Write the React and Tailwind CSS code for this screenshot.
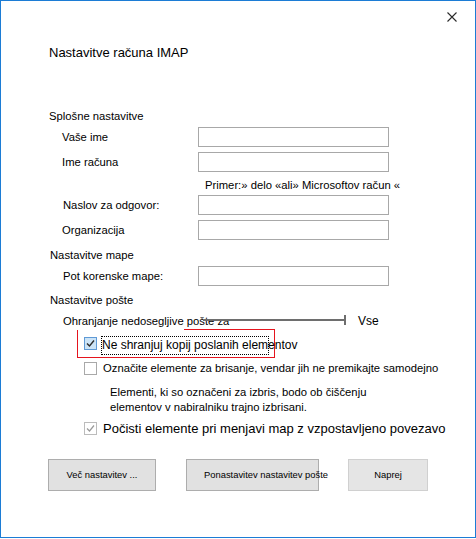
import React from "react";

function Check({ color = "#333", w = 1.4 }) {
  return (
    <svg width="11" height="11" viewBox="0 0 11 11" className="block">
      <polyline points="2,5.5 4.5,8 9,2.5" fill="none" stroke={color} strokeWidth={w} />
    </svg>
  );
}

function Box({ variant }) {
  if (variant === "focus") {
    return (
      <div className="w-[13px] h-[13px] border border-[#5f9ad6] bg-[#cce4f7] flex items-center justify-center shrink-0">
        <Check color="#2b2b2b" />
      </div>
    );
  }
  if (variant === "disabled") {
    return (
      <div className="w-[13px] h-[13px] border border-[#bcbcbc] bg-white flex items-center justify-center shrink-0">
        <Check color="#9a9a9a" w={1.2} />
      </div>
    );
  }
  return <div className="w-[13px] h-[13px] border border-[#a9a9a9] bg-white shrink-0" />;
}

function Field({ label, pl, mt }) {
  return (
    <div className={`flex items-center h-[20px] ${mt}`}>
      <div className={`w-[149px] ${pl} text-[11.25px] leading-[16px] whitespace-nowrap`}>{label}</div>
      <div className="w-[191px] h-[20px] border border-[#a8a8a8] bg-white" />
    </div>
  );
}

export default function App() {
  return (
    <div
      className="w-[476px] h-[538px] border border-[#1c7cd5] bg-white flex flex-col text-black"
      style={{ fontFamily: '"Liberation Sans", Arial, sans-serif' }}
    >
      <div className="h-[42px] flex justify-end items-start pt-[11px] pr-[18px]">
        <svg width="10" height="10" viewBox="0 0 10 10" className="block">
          <path d="M0.5 0.5 L9.5 9.5 M9.5 0.5 L0.5 9.5" stroke="#2a2a2a" strokeWidth="1.1" fill="none" />
        </svg>
      </div>

      <div className="pl-[48px] flex flex-col">
        <div className="h-[20px] leading-[20px] text-[13px] whitespace-nowrap">Nastavitve računa IMAP</div>

        <div className="mt-[45px] h-[17px] leading-[17px] text-[11.25px]">Splošne nastavitve</div>

        <Field label="Vaše ime" pl="pl-[13px]" mt="mt-[2px]" />
        <Field label="Ime računa" pl="pl-[13px]" mt="mt-[5px]" />

        <div className="mt-[5px] h-[16px] leading-[16px] pl-[156px] text-[11.25px] whitespace-nowrap">
          Primer:» delo «ali» Microsoftov račun «
        </div>

        <Field label="Naslov za odgovor:" pl="pl-[14px]" mt="mt-[2px]" />
        <Field label="Organizacija" pl="pl-[13px]" mt="mt-[5px]" />

        <div className="mt-[7px] h-[16px] leading-[16px] pl-[1px] text-[11.25px]">Nastavitve mape</div>

        <Field label="Pot korenske mape:" pl="pl-[14px]" mt="mt-[3px]" />

        <div className="mt-[6px] h-[16px] leading-[16px] pl-[1px] text-[11.25px]">Nastavitve pošte</div>

        <div className="relative mt-[5px] flex flex-col">
          <div className="absolute left-[28px] top-[16px] w-[198px] h-[29px] border border-[#e5141e]" />

          <div className="relative h-[16px] text-[11.25px] leading-[16px] pl-[14px] whitespace-nowrap flex">
            <span className="relative z-10 bg-white h-[17px]">Ohranjanje nedosegljive</span>
            <span className="relative">&nbsp;pošte za</span>
            <div className="absolute left-[154px] top-[6px] w-[142px] h-[2px] bg-[#6e6e6e]" />
            <div className="absolute left-[295px] top-[2px] w-[2px] h-[10px] bg-[#6e6e6e]" />
            <span className="absolute left-[309px] top-0 text-[12px]">Vse</span>
          </div>

          <div className="relative mt-[7px] h-[19px] flex items-start pl-[35px]">
            <div className="mt-[1px]">
              <Box variant="focus" />
            </div>
            <div className="ml-[4px] w-[168px] h-[19px] border border-dotted border-black">
              <div className="text-[12px] leading-[17px] whitespace-nowrap pl-[0px]">
                Ne shranjuj kopij poslanih elementov
              </div>
            </div>
          </div>
        </div>

        <div className="mt-[5px] h-[16px] flex items-center pl-[35px]">
          <Box />
          <span className="ml-[6px] text-[11.25px] leading-[16px] whitespace-nowrap">
            Označite elemente za brisanje, vendar jih ne premikajte samodejno
          </span>
        </div>

        <div className="mt-[9px] pl-[61px] text-[11.25px] leading-[15px]">
          <div className="whitespace-nowrap">Elementi, ki so označeni za izbris, bodo ob čiščenju</div>
          <div className="whitespace-nowrap">elementov v nabiralniku trajno izbrisani.</div>
        </div>

        <div className="mt-[4px] h-[19px] flex items-center pl-[35px]">
          <Box variant="disabled" />
          <span className="ml-[6px] text-[13px] leading-[19px] whitespace-nowrap">
            Počisti elemente pri menjavi map z vzpostavljeno povezavo
          </span>
        </div>

        <div className="mt-[21px] -ml-[1px] flex items-start">
          <div className="w-[108px] h-[32px] border border-[#adadad] bg-[#e1e1e1] flex items-center justify-center text-[9.4px] whitespace-nowrap">
            Več nastavitev ...
          </div>
          <div className="ml-[30px] w-[133px] h-[32px] border border-[#adadad] bg-[#e1e1e1] flex items-center pl-[17px] text-[9.4px] whitespace-nowrap">
            Ponastavitev nastavitev pošte
          </div>
          <div className="ml-[29px] w-[80px] h-[32px] border border-[#d0d0d0] bg-[#e5e5e5] flex items-center justify-center text-[9.4px] whitespace-nowrap">
            Naprej
          </div>
        </div>
      </div>
    </div>
  );
}
